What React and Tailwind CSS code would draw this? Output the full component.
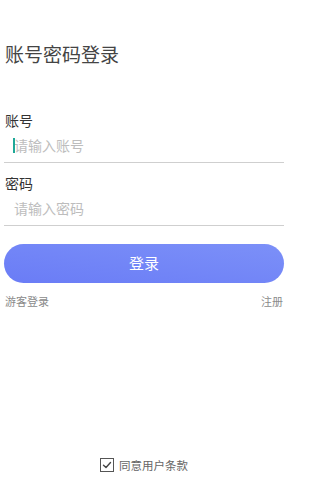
import React from "react";

const font = { fontFamily: '"Noto Sans CJK SC", "Noto Sans", sans-serif' };

export default function App() {
  return (
    <div
      className="w-[288px] h-[480px] bg-white flex flex-col overflow-hidden"
      style={font}
    >
      <div className="pt-[41px] pl-[5px] text-[19px] leading-[26px] text-[#444]">
        账号密码登录
      </div>

      <div className="mt-[45px] px-[4px] flex flex-col">
        <div className="pl-[1px] text-[14px] leading-[16px] text-[#333]">账号</div>
        <div className="relative h-[35px] flex items-center pl-[10px] border-b border-[#cfcfcf] text-[14px] text-[#bdbdbd]">
          <span className="absolute left-[9px] top-[10px] w-[2px] h-[15px] bg-[#1ea898]"></span>
          请输入账号
        </div>

        <div className="mt-[12px] pl-[1px] text-[14px] leading-[16px] text-[#333]">密码</div>
        <div className="h-[35px] flex items-center pl-[10px] border-b border-[#cfcfcf] text-[14px] text-[#bdbdbd]">
          请输入密码
        </div>

        <div className="mt-[18px] h-[39px] rounded-full bg-gradient-to-tr from-[#6a7cf6] to-[#7c90f8] flex items-center justify-center text-white text-[15px]">
          登录
        </div>

        <div className="mt-[10px] flex justify-between px-[1px] text-[11px] leading-[16px] text-[#8a8a8a]">
          <span>游客登录</span>
          <span>注册</span>
        </div>
      </div>

      <div className="mt-auto mb-[7px] flex items-center justify-center gap-[5px]">
        <div className="w-[14px] h-[14px] border-[1.5px] border-[#555] flex items-center justify-center">
          <svg width="10" height="10" viewBox="0 0 10 10" fill="none">
            <path d="M1.5 5.2 L4 7.5 L8.5 2.5" stroke="#444" strokeWidth="1.4" strokeLinecap="round" strokeLinejoin="round" />
          </svg>
        </div>
        <span className="text-[11.5px] leading-[16px] text-[#666]">同意用户条款</span>
      </div>
    </div>
  );
}
